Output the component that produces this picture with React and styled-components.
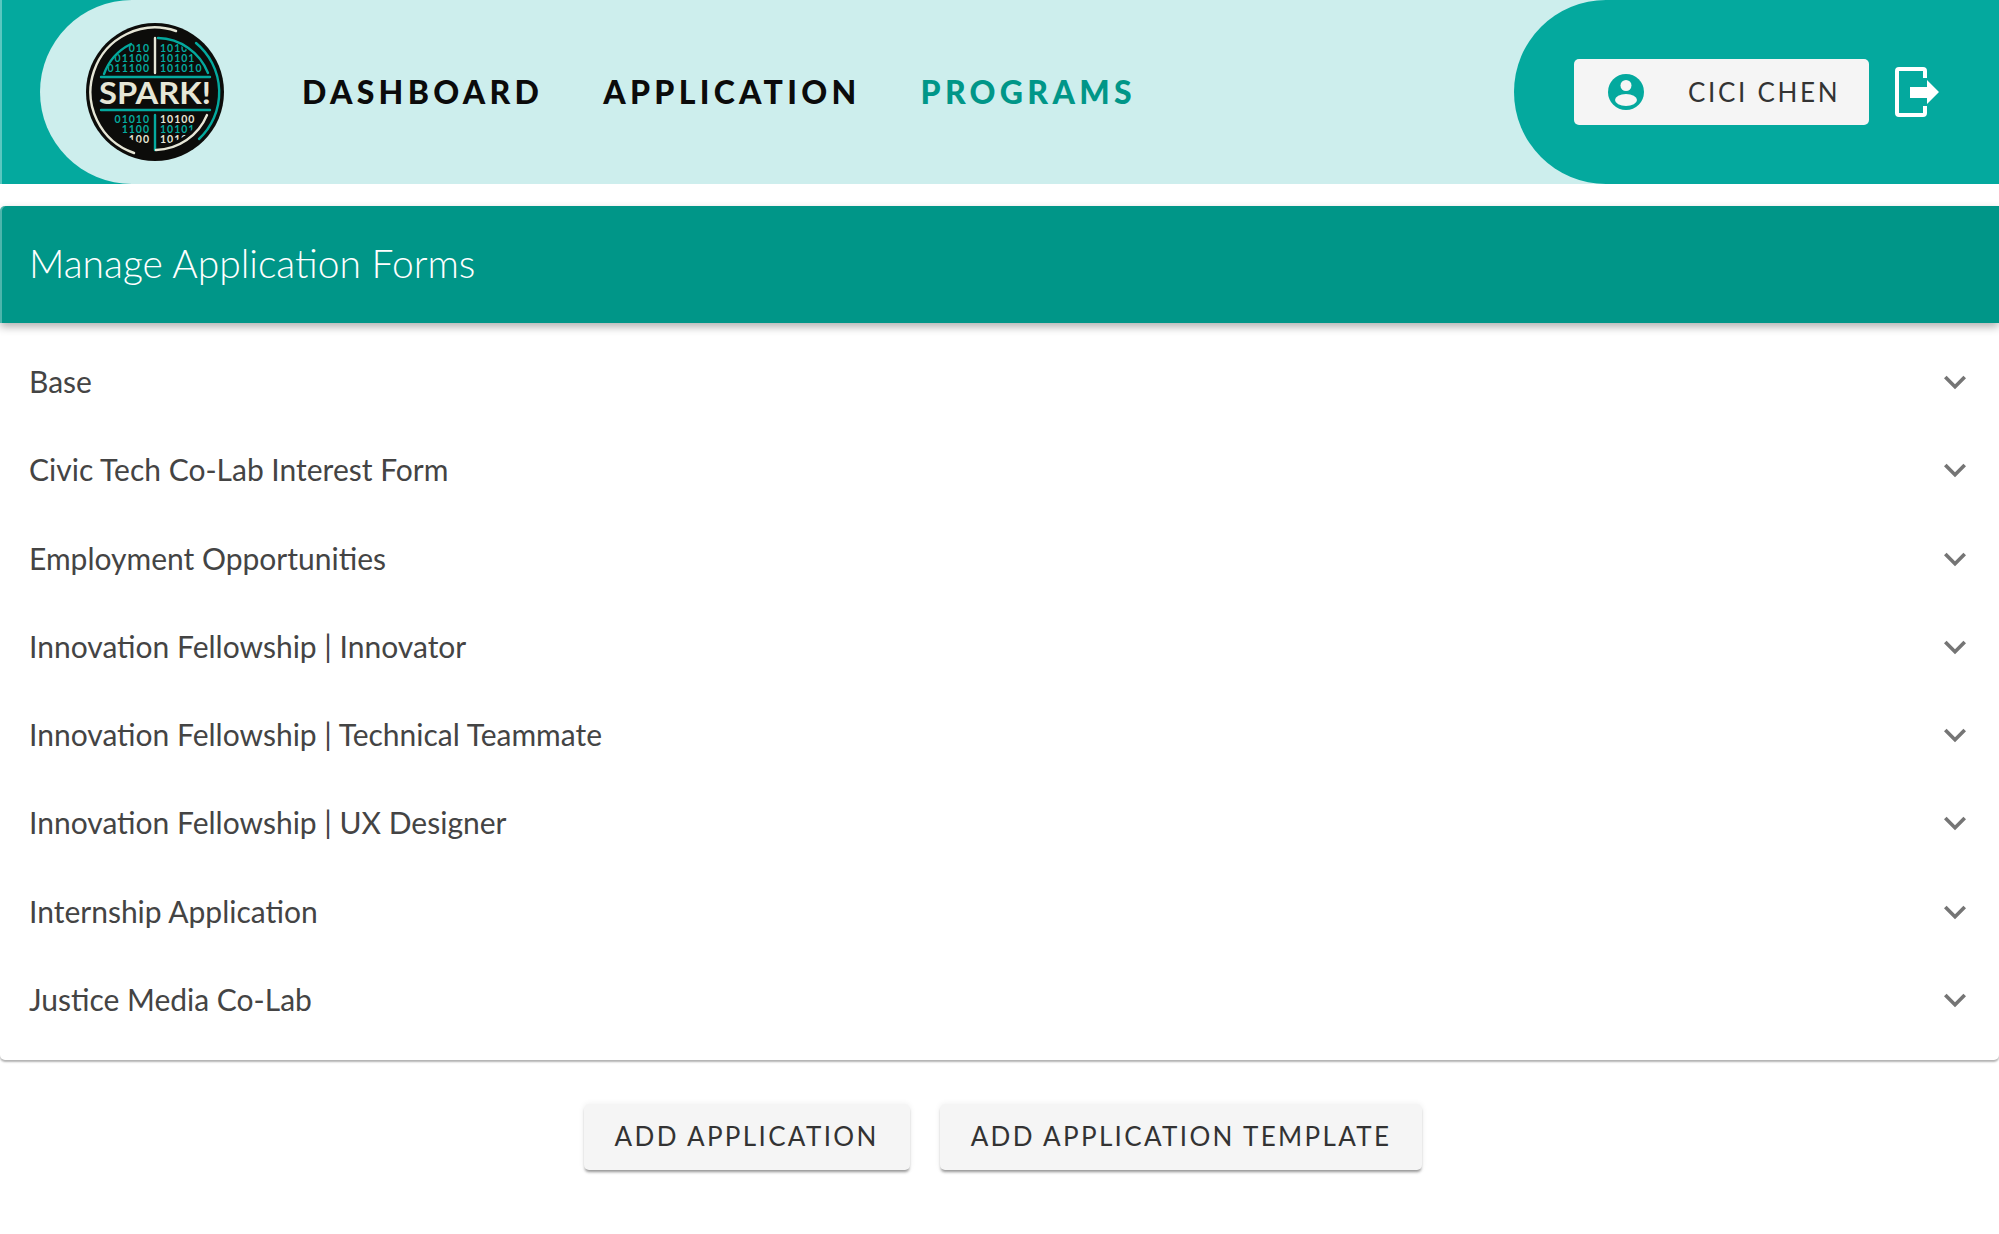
import React from "react";
import styled, { createGlobalStyle } from "styled-components";

const teal = "#04a99e";
const tealDark = "#009688";
const tealLight = "#cdeeed";
const cream = "#e6e6d6";

const forms = [
  "Base",
  "Civic Tech Co-Lab Interest Form",
  "Employment Opportunities",
  "Innovation Fellowship | Innovator",
  "Innovation Fellowship | Technical Teammate",
  "Innovation Fellowship | UX Designer",
  "Internship Application",
  "Justice Media Co-Lab",
];

const GlobalStyle = createGlobalStyle`
  html, body {
    margin: 0;
    padding: 0;
    background: #fff;
    font-family: "Lato", "Open Sans", sans-serif;
    color: #333;
  }
`;

const Page = styled.div`
  width: 1999px;
  height: 1234px;
  overflow: hidden;
  background: #fff;
`;

const Header = styled.header`
  display: flex;
  height: 184px;
  background: ${teal};
  padding-left: 40px;
  box-sizing: border-box;
  box-shadow: inset 2px 0 0 rgba(255, 255, 255, 0.35);
`;

const HeaderBody = styled.div`
  flex: 1;
  display: flex;
  align-items: center;
  padding-left: 46px;
  background: ${tealLight};
  border-radius: 92px 0 0 92px;
`;

const LogoMark = styled.svg`
  width: 138px;
  height: 138px;
  flex: none;
  display: block;
`;

const Nav = styled.nav`
  display: flex;
  gap: 60px;
  margin-left: 78px;
  padding-bottom: 2px;
`;

const NavLink = styled.a`
  font-size: 32px;
  font-weight: 900;
  letter-spacing: 4.3px;
  color: ${(p) => (p.$active ? tealDark : "#0b0b0b")};
`;

const UserArea = styled.div`
  margin-left: auto;
  width: 485px;
  height: 100%;
  display: flex;
  align-items: center;
  gap: 26px;
  padding-left: 60px;
  box-sizing: border-box;
  background: ${teal};
  border-radius: 92px 0 0 92px;
`;

const UserChip = styled.div`
  width: 295px;
  height: 66px;
  display: flex;
  align-items: center;
  padding-left: 34px;
  box-sizing: border-box;
  background: #f5f5f5;
  border-radius: 5px;
`;

const UserName = styled.span`
  margin-left: 44px;
  font-size: 26px;
  letter-spacing: 2.7px;
  color: #333;
`;

const Card = styled.section`
  margin-top: 22px;
  border-radius: 5px;
  box-shadow: 0 2px 2px rgba(0, 0, 0, 0.3);
`;

const CardTitle = styled.div`
  height: 117px;
  display: flex;
  align-items: center;
  padding: 0 0 3px 29px;
  box-sizing: border-box;
  background: ${tealDark};
  color: #fff;
  font-size: 39px;
  font-weight: 300;
  border-radius: 5px 0 0 0;
  box-shadow: 0 4px 8px rgba(0, 0, 0, 0.3), inset 2px 0 0 rgba(255, 255, 255, 0.3);
`;

const FormList = styled.div`
  padding: 15px 0 16px;
`;

const FormRow = styled.div`
  height: 88.25px;
  display: flex;
  align-items: center;
  justify-content: space-between;
  padding: 0 23px 0 29px;
`;

const FormName = styled.span`
  margin-top: -2px;
  font-size: 30px;
  font-weight: 400;
  color: #444;
`;

const Chevron = styled.svg`
  width: 44px;
  height: 44px;
  fill: #757575;
  flex: none;
  margin-right: -1px;
`;

const Actions = styled.div`
  display: flex;
  justify-content: center;
  gap: 30px;
  margin-top: 44px;
  padding-left: 7px;
`;

const ActionButton = styled.button`
  height: 66px;
  padding: 0 31px 2px;
  border: none;
  border-radius: 5px;
  background: #f5f5f5;
  color: #333;
  font-family: inherit;
  font-size: 26px;
  letter-spacing: 2.35px;
  box-shadow: 0 3px 3px -1px rgba(0, 0, 0, 0.4), 0 0 6px rgba(0, 0, 0, 0.07);
`;

const digitRows = [
  { x: -5, y: -40, anchor: "end", text: "010", fill: teal },
  { x: -5, y: -30, anchor: "end", text: "01100", fill: teal },
  { x: -5, y: -20, anchor: "end", text: "011100", fill: teal },
  { x: 5, y: -40, anchor: "start", text: "1010", fill: teal },
  { x: 5, y: -30, anchor: "start", text: "10101", fill: teal },
  { x: 5, y: -20, anchor: "start", text: "101010", fill: teal },
  { x: -5, y: 31, anchor: "end", text: "01010", fill: teal },
  { x: -5, y: 41, anchor: "end", text: "1100", fill: teal },
  { x: -5, y: 51, anchor: "end", text: "100", fill: cream },
  { x: 5, y: 31, anchor: "start", text: "10100", fill: cream },
  { x: 5, y: 41, anchor: "start", text: "10101", fill: teal },
  { x: 5, y: 51, anchor: "start", text: "1010", fill: cream },
];

const Logo = () => (
  <LogoMark viewBox="-69 -69 138 138">
    <defs>
      <clipPath id="logo-digits">
        <circle r="53" />
      </clipPath>
    </defs>
    <circle r="69" fill="#0c0c0a" />
    <g
      clipPath="url(#logo-digits)"
      fontFamily="Lato, sans-serif"
      fontSize="10.5"
      fontWeight="700"
      letterSpacing="1"
    >
      {digitRows.map((r) => (
        <text key={`${r.x}${r.y}`} x={r.x} y={r.y} textAnchor={r.anchor} fill={r.fill}>
          {r.text}
        </text>
      ))}
    </g>
    <g fill="none" strokeWidth="2.4" strokeLinecap="round">
      <path d="M21 -61 A64 64 0 1 0 -21 61" stroke={cream} />
      <path d="M41 -49 A64 64 0 0 1 44 47" stroke={teal} />
      <path d="M-24 -48 A54 54 0 0 0 -51 -18" stroke={teal} />
      <path d="M3 -54 A55 55 0 0 1 53 -19" stroke={teal} />
      <path d="M0 -54 V-19" stroke={cream} />
      <path d="M0 23 V58" stroke={teal} />
      <path d="M1 58 A57 57 0 0 0 52 23" stroke={cream} />
      <path d="M-54 -15 H55 M-54 18 H55" stroke={teal} />
    </g>
    <text
      x="0"
      y="12"
      textAnchor="middle"
      textLength="112"
      lengthAdjust="spacingAndGlyphs"
      fill={cream}
      fontFamily="Lato, sans-serif"
      fontSize="30"
      fontWeight="700"
    >
      SPARK!
    </text>
  </LogoMark>
);

const UserIcon = () => (
  <svg width="36" height="36" viewBox="0 0 36 36">
    <circle cx="18" cy="18" r="18" fill={teal} />
    <circle cx="18" cy="11.5" r="5.5" fill="#f5f5f5" />
    <ellipse cx="18" cy="26" rx="11" ry="6" fill="#f5f5f5" />
  </svg>
);

const LogoutIcon = () => (
  <svg width="45" height="50" viewBox="0 0 45 50">
    <path
      d="M30 11 V4 a2 2 0 0 0 -2 -2 H4 a2 2 0 0 0 -2 2 V46 a2 2 0 0 0 2 2 H28 a2 2 0 0 0 2 -2 V39"
      fill="none"
      stroke="#fff"
      strokeWidth="4"
    />
    <polygon points="15,20 32,20 32,13 44,25 32,37 32,31 15,31" fill="#fff" />
  </svg>
);

const ExpandIcon = () => (
  <Chevron viewBox="0 0 24 24">
    <path d="M16.59 8.59L12 13.17 7.41 8.59 6 10l6 6 6-6z" />
  </Chevron>
);

export default function App() {
  return (
    <Page>
      <GlobalStyle />
      <Header>
        <HeaderBody>
          <Logo />
          <Nav>
            <NavLink>DASHBOARD</NavLink>
            <NavLink>APPLICATION</NavLink>
            <NavLink $active>PROGRAMS</NavLink>
          </Nav>
          <UserArea>
            <UserChip>
              <UserIcon />
              <UserName>CICI CHEN</UserName>
            </UserChip>
            <LogoutIcon />
          </UserArea>
        </HeaderBody>
      </Header>
      <Card>
        <CardTitle>Manage Application Forms</CardTitle>
        <FormList>
          {forms.map((name) => (
            <FormRow key={name}>
              <FormName>{name}</FormName>
              <ExpandIcon />
            </FormRow>
          ))}
        </FormList>
      </Card>
      <Actions>
        <ActionButton>ADD APPLICATION</ActionButton>
        <ActionButton>ADD APPLICATION TEMPLATE</ActionButton>
      </Actions>
    </Page>
  );
}
